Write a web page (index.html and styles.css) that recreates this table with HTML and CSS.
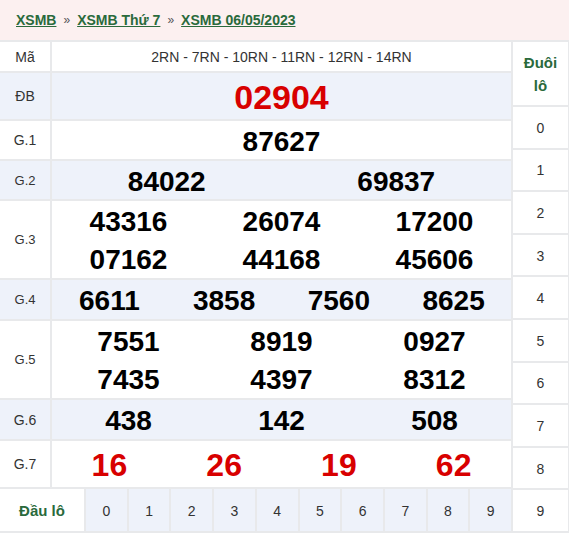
FILE: index.html
```html
<!DOCTYPE html>
<html lang="vi">
<head>
<meta charset="utf-8">
<title>XSMB 06/05/2023</title>
<link rel="stylesheet" href="styles.css">
</head>
<body>
<div class="crumb">
  <a href="#">XSMB</a><span class="sep">»</span><a href="#">XSMB Thứ 7</a><span class="sep">»</span><a href="#">XSMB 06/05/2023</a>
</div>
<div class="board">
  <div class="main">
    <div class="row r-ma">
      <div class="lbl">Mã</div>
      <div class="val code">2RN - 7RN - 10RN - 11RN - 12RN - 14RN</div>
    </div>
    <div class="row r-db alt">
      <div class="lbl">ĐB</div>
      <div class="val c1"><span class="num big">02904</span></div>
    </div>
    <div class="row r-1">
      <div class="lbl">G.1</div>
      <div class="val c1"><span class="num">87627</span></div>
    </div>
    <div class="row r-1 alt">
      <div class="lbl sm">G.2</div>
      <div class="val c2"><span class="num">84022</span><span class="num">69837</span></div>
    </div>
    <div class="row r-2">
      <div class="lbl sm">G.3</div>
      <div class="val c3"><span class="num">43316</span><span class="num">26074</span><span class="num">17200</span><span class="num">07162</span><span class="num">44168</span><span class="num">45606</span></div>
    </div>
    <div class="row r-4 alt">
      <div class="lbl sm">G.4</div>
      <div class="val c4"><span class="num">6611</span><span class="num">3858</span><span class="num">7560</span><span class="num">8625</span></div>
    </div>
    <div class="row r-2">
      <div class="lbl sm">G.5</div>
      <div class="val c3"><span class="num">7551</span><span class="num">8919</span><span class="num">0927</span><span class="num">7435</span><span class="num">4397</span><span class="num">8312</span></div>
    </div>
    <div class="row r-4 alt">
      <div class="lbl">G.6</div>
      <div class="val c3"><span class="num">438</span><span class="num">142</span><span class="num">508</span></div>
    </div>
    <div class="row r-db">
      <div class="lbl">G.7</div>
      <div class="val c4"><span class="num red">16</span><span class="num red">26</span><span class="num red">19</span><span class="num red">62</span></div>
    </div>
    <div class="dau">
      <div class="dau-lbl">Đầu lô</div>
      <div class="d">0</div><div class="d">1</div><div class="d">2</div><div class="d">3</div><div class="d">4</div>
      <div class="d">5</div><div class="d">6</div><div class="d">7</div><div class="d">8</div><div class="d">9</div>
    </div>
  </div>
  <div class="duoi">
    <div class="duoi-head">Đuôi<br>lô</div>
    <div class="t">0</div><div class="t">1</div><div class="t">2</div><div class="t">3</div><div class="t">4</div>
    <div class="t">5</div><div class="t">6</div><div class="t">7</div><div class="t">8</div><div class="t">9</div>
  </div>
</div>
</body>
</html>
```

FILE: styles.css
```css
* { box-sizing: border-box; }

body {
  margin: 0;
  background: #ffffff;
  font-family: "Liberation Sans", Arial, sans-serif;
  color: #333333;
}

.crumb {
  height: 40px;
  background: #fcf0f0;
  display: flex;
  align-items: center;
  gap: 7px;
  padding: 0 0 0 16px;
  font-size: 14px;
  font-weight: bold;
}

.crumb a {
  color: #2a6a3c;
  text-decoration: underline;
}

.crumb .sep {
  color: #555555;
  font-size: 12px;
  font-weight: normal;
}

.board {
  display: flex;
  gap: 2px;
  background: #e8e9eb;
  padding: 2px 1px 2px 0;
}

.main {
  width: 511px;
  display: flex;
  flex-direction: column;
  gap: 2px;
}

.row {
  display: flex;
  gap: 2px;
}

.r-ma { height: 29px; }
.r-db { height: 46px; }
.r-1 { height: 38px; }
.r-2 { height: 77px; }
.r-4 { height: 39px; }

.lbl {
  width: 50px;
  flex: none;
  background: #ffffff;
  display: flex;
  align-items: center;
  justify-content: center;
  font-size: 14px;
  color: #333333;
}

.lbl.sm { font-size: 13px; }

.val {
  flex: 1;
  background: #ffffff;
  display: grid;
  align-items: center;
  justify-items: center;
}

.alt .lbl,
.alt .val { background: #eef2fa; }

.code {
  display: flex;
  justify-content: center;
  font-size: 14px;
  color: #333333;
}

.c1 { grid-template-columns: 1fr; }
.c2 { grid-template-columns: repeat(2, 1fr); }
.c3 { grid-template-columns: repeat(3, 1fr); }
.c4 { grid-template-columns: repeat(4, 1fr); }

.num {
  font-size: 28px;
  font-weight: bold;
  color: #000000;
  line-height: 1;
  padding-top: 3px;
}

.num.big {
  font-size: 34px;
  color: #d80000;
  padding-top: 1px;
}

.num.red {
  font-size: 32px;
  color: #d80000;
  padding-top: 2px;
}

.dau {
  height: 42px;
  display: flex;
  gap: 2px;
}

.dau-lbl {
  width: 84px;
  flex: none;
  background: #ffffff;
  display: flex;
  align-items: center;
  justify-content: center;
  font-size: 15px;
  font-weight: bold;
  color: #2a6a3c;
}

.d {
  flex: 1;
  background: #eef2fa;
  display: flex;
  align-items: center;
  justify-content: center;
  font-size: 14px;
  color: #333333;
  padding-top: 1px;
}

.duoi {
  flex: 1;
  display: flex;
  flex-direction: column;
  gap: 2px;
}

.duoi-head {
  height: 63px;
  flex: none;
  background: #ffffff;
  display: flex;
  align-items: center;
  justify-content: center;
  text-align: center;
  font-size: 15px;
  font-weight: bold;
  line-height: 23px;
  color: #2a6a3c;
}

.t {
  flex: 1;
  background: #ffffff;
  display: flex;
  align-items: center;
  justify-content: center;
  font-size: 14px;
  color: #333333;
  padding-top: 1px;
}
```
